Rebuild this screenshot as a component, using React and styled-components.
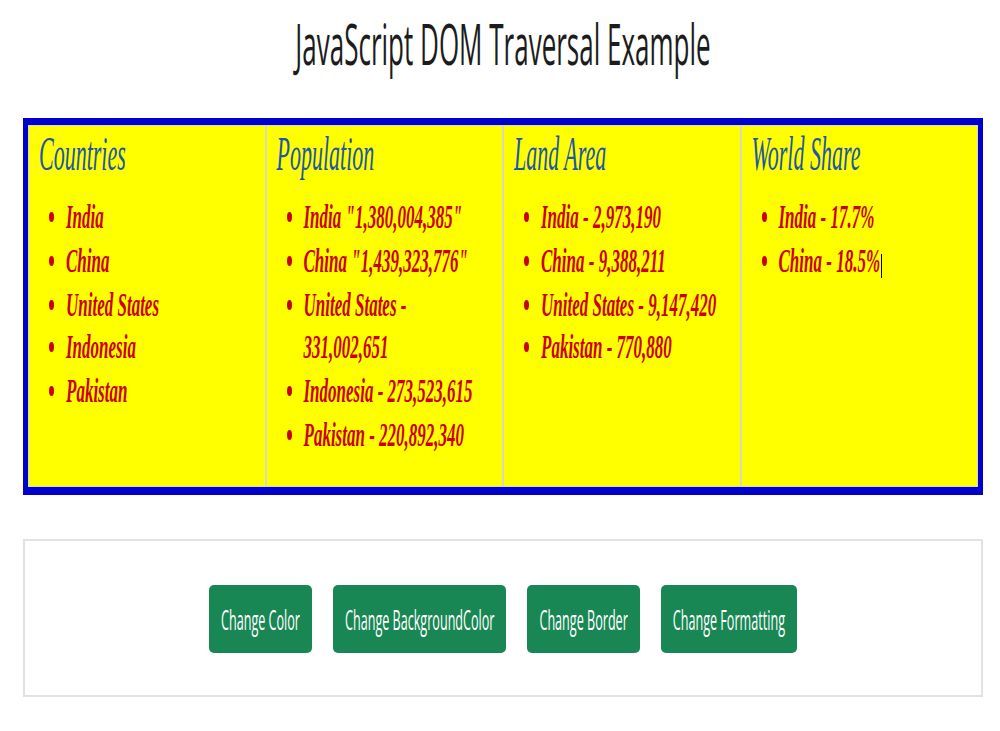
import React from "react";
import styled, { createGlobalStyle } from "styled-components";

const Global = createGlobalStyle`
  html, body { margin: 0; padding: 0; background: #ffffff; }
  body { font-family: "Open Sans", "Noto Sans", sans-serif; }
`;

const Page = styled.div`
  width: 960px;
  margin-left: 23px;
  padding-top: 14px;
`;

const Title = styled.h1`
  margin: 0 0 78px;
  font-family: "Open Sans", "Noto Sans", sans-serif;
  font-weight: 500;
  font-size: 26px;
  line-height: 26px;
  color: #1c1c1c;
  text-align: center;
  transform: scaleY(2.2);
  transform-origin: top center;
`;

const Table = styled.div`
  display: grid;
  grid-template-columns: repeat(4, 1fr);
  border-style: solid;
  border-color: #0000cc;
  border-width: 7px 5px 8px;
  background: #ffff00;
`;

const Cell = styled.div`
  box-sizing: border-box;
  min-height: 362px;
  border: 1px solid #d9d9c0;
  padding: 4px 10px 0;
`;

const Heading = styled.h2`
  margin: 0;
  font-family: "Liberation Serif", "Times New Roman", serif;
  font-style: italic;
  font-weight: 400;
  font-size: 22px;
  line-height: 22px;
  color: #2056a8;
  white-space: nowrap;
  transform: scaleY(2.2);
  transform-origin: top left;
`;

const List = styled.ul`
  margin: 44px 0 0;
  padding: 0 6px 0 27px;
  font-family: "Liberation Serif", "Times New Roman", serif;
  font-style: italic;
  font-weight: 700;
  font-size: 17px;
  line-height: 21.75px;
  color: #cc0000;
  transform: scaleY(2);
  transform-origin: top left;
`;

const Item = styled.li``;

const Caret = styled.span`
  display: inline-block;
  width: 1px;
  height: 12.5px;
  margin-left: 1px;
  background: #000;
  vertical-align: -3.6px;
`;

const Panel = styled.div`
  margin-top: 44px;
  border: 2px solid #e2e2e2;
  padding: 44px 0 42px;
  display: flex;
  justify-content: center;
  gap: 21px;
`;

const Button = styled.button`
  height: 68px;
  padding: 2px 12px 0;
  border: none;
  border-radius: 5px;
  background: #198754;
  color: #ffffff;
  font-family: "Open Sans", "Noto Sans", sans-serif;
  font-size: 12.6px;
  line-height: 17px;
  cursor: pointer;
  display: flex;
  align-items: center;
`;

const Label = styled.span`
  display: inline-block;
  white-space: nowrap;
  transform: scaleY(2.2);
  transform-origin: center;
`;

const columns = [
  {
    title: "Countries",
    items: ["India", "China", "United States", "Indonesia", "Pakistan"],
  },
  {
    title: "Population",
    items: [
      'India "1,380,004,385"',
      'China "1,439,323,776"',
      "United States - 331,002,651",
      "Indonesia - 273,523,615",
      "Pakistan - 220,892,340",
    ],
  },
  {
    title: "Land Area",
    items: [
      "India - 2,973,190",
      "China - 9,388,211",
      "United States - 9,147,420",
      "Pakistan - 770,880",
    ],
  },
  {
    title: "World Share",
    items: ["India - 17.7%", "China - 18.5%"],
    caret: true,
  },
];

const buttons = [
  "Change Color",
  "Change BackgroundColor",
  "Change Border",
  "Change Formatting",
];

export default function App() {
  return (
    <>
      <Global />
      <Page>
        <Title>JavaScript DOM Traversal Example</Title>
        <Table>
          {columns.map((col) => (
            <Cell key={col.title}>
              <Heading>{col.title}</Heading>
              <List>
                {col.items.map((it, i) => (
                  <Item key={it}>
                    {it}
                    {col.caret && i === col.items.length - 1 ? <Caret /> : null}
                  </Item>
                ))}
              </List>
            </Cell>
          ))}
        </Table>
        <Panel>
          {buttons.map((b) => (
            <Button key={b}>
              <Label>{b}</Label>
            </Button>
          ))}
        </Panel>
      </Page>
    </>
  );
}
